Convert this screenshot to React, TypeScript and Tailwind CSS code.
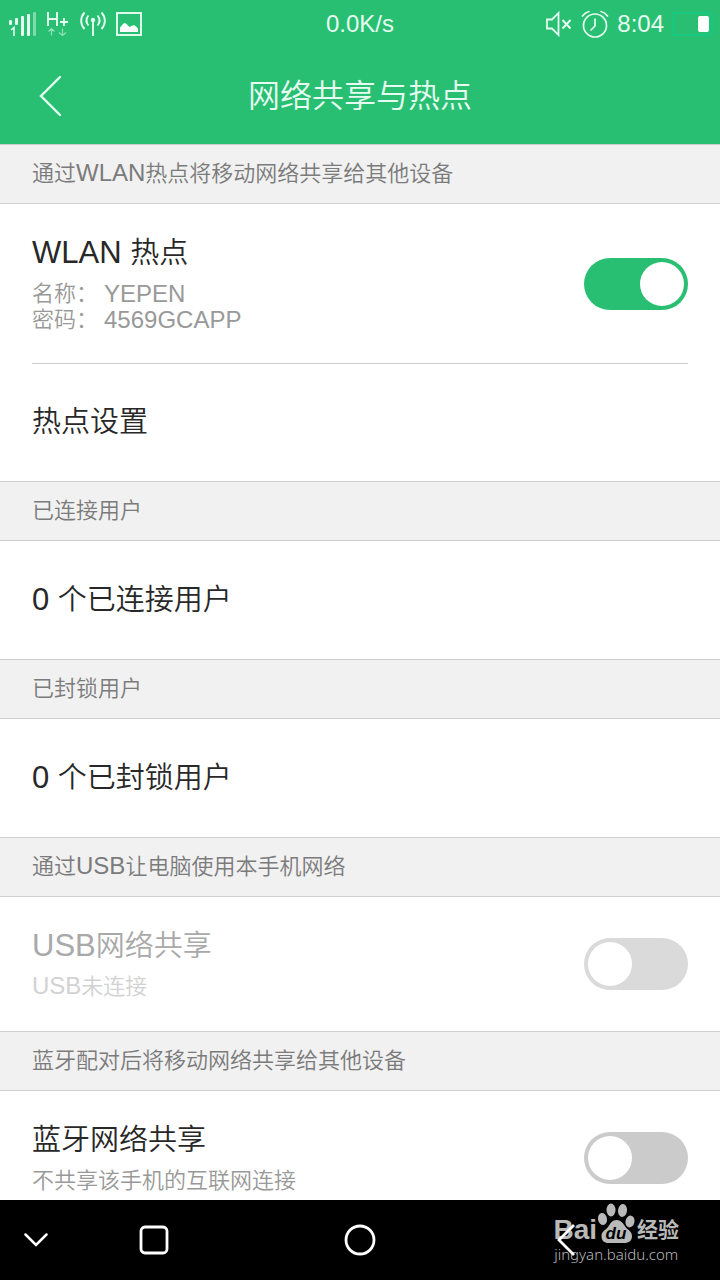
import type { ReactNode } from "react";

// Latin runs are set slightly larger than the Chinese text around them
const MixedText = ({ text, latin }: { text: string; latin: string }) => (
    <>
        {text.split(/([A-Za-z0-9]+ ?)/).map((part, i) =>
            i % 2 === 1 ? (
                <span key={i} className={latin}>
                    {part}
                </span>
            ) : (
                part
            )
        )}
    </>
);

const SectionTitle = ({ children }: { children: string }) => (
    <h2 className="flex h-[60px] items-center border-y border-[#cfcfcf] bg-[#f1f1f1] px-8 text-[22px] leading-7 text-[#7b7b7b]">
        <span>
            <MixedText text={children} latin="text-[24px] leading-none" />
        </span>
    </h2>
);

const LinkRow = ({ children }: { children: string }) => (
    <button className="flex h-[118px] w-full items-center px-8 text-left text-[29px] leading-[48px] text-[#282828]">
        <span>
            <MixedText text={children} latin="text-[31px] leading-none" />
        </span>
    </button>
);

type SwitchRowProps = {
    id: string;
    title: string;
    checked?: boolean;
    disabled?: boolean;
    children: ReactNode;
};

const SwitchRow = ({ id, title, checked, disabled, children }: SwitchRowProps) => (
    <div className="flex items-center justify-between px-8 py-[25px]">
        <div className="pb-[6px]">
            <label
                htmlFor={id}
                className={`block text-[29px] leading-[48px] ${disabled ? "text-[#a9a9a9]" : "text-[#282828]"}`}
            >
                <MixedText text={title} latin="text-[31px] leading-none" />
            </label>
            <div
                className={`mt-1 text-[22px] leading-[26px] ${disabled ? "text-[#d2d2d2]" : "text-[#999999]"}`}
            >
                {children}
            </div>
        </div>
        <input
            id={id}
            type="checkbox"
            role="switch"
            defaultChecked={checked}
            disabled={disabled}
            className="h-[52px] w-[104px] shrink-0 appearance-none rounded-full bg-[#cbcbcb] p-1 before:block before:size-11 before:rounded-full before:bg-white checked:bg-[#28bf73] checked:before:ml-auto disabled:bg-[#dadada]"
        />
    </div>
);

const SignalIcon = () => (
    <svg width="28" height="26" viewBox="0 0 28 26" fill="currentColor">
        <rect x="1" y="9" width="3" height="5" rx="1" />
        <rect x="7" y="7" width="3" height="7" rx="1" />
        <rect x="13" y="5" width="3" height="20" rx="1" />
        <rect x="19" y="3" width="3" height="22" rx="1" />
        <rect x="25" y="1" width="3" height="24" rx="1" opacity="0.45" />
        <path d="M3 19l3-2.500V25" fill="none" stroke="currentColor" strokeWidth="1.600" />
    </svg>
);

const DataIcon = () => (
    <svg width="24" height="26" viewBox="0 0 24 26" fill="none" stroke="currentColor">
        <path d="M2 1v14M11 1v14M2 8h9M14 11h8M18 7v8" strokeWidth="1.900" />
        <path d="M5.500 24.500v-7M2.500 20.500l3-3 3 3M16.500 17.500v7M13 21.500l3.500 3 3.500-3" strokeWidth="1.200" opacity="0.55" />
    </svg>
);

const AntennaIcon = () => (
    <svg width="26" height="26" viewBox="0 0 26 26" fill="none" stroke="currentColor" strokeWidth="1.900">
        <circle cx="13" cy="9" r="2.200" fill="currentColor" stroke="none" />
        <path d="M13 9v16" />
        <path d="M8.500 4.500c-2.500 3-2.500 7 0 10M17.500 4.500c2.500 3 2.500 7 0 10" />
        <path d="M4.500 1.500c-4.500 5-4.500 11.500 0 16.500M21.500 1.500c4.500 5 4.500 11.500 0 16.500" />
    </svg>
);

const PictureIcon = () => (
    <svg width="26" height="26" viewBox="0 0 26 26">
        <rect x="1" y="2" width="24" height="22" fill="none" stroke="currentColor" strokeWidth="1.900" />
        <path
            d="M4 21v-4.500l3.500-4q1.500-1 3 .5l3 3 3-1.500q1.500-.8 3 .5l2.500 2.500V21z"
            fill="white"
        />
    </svg>
);

const MuteIcon = () => (
    <svg width="28" height="26" viewBox="0 0 28 26" fill="none" stroke="currentColor" strokeWidth="1.800">
        <path d="M2 8.500h5l6.500-6.500v22L7 17.500H2z" />
        <path d="M17.500 9l8 8.500M25.500 9l-8 8.500" strokeWidth="2" />
    </svg>
);

const AlarmIcon = () => (
    <svg width="28" height="28" viewBox="0 0 28 28" fill="none" stroke="currentColor" strokeWidth="1.700" strokeLinecap="round">
        <circle cx="14" cy="15.500" r="11.500" />
        <path d="M14 9v7l-4 4M1.500 6Q4 2.500 8 1.500M20 1.500q4 1 6.500 4.500" />
    </svg>
);

const BatteryIcon = () => (
    <svg width="42" height="26" viewBox="0 0 42 26">
        <path d="M1 2h37v6h2v10h-2v6H1z" fill="none" stroke="#12cb88" strokeWidth="1.500" />
        <rect x="26" y="5" width="11" height="16" rx="2" fill="white" />
    </svg>
);

const StatusBar = () => (
    <div className="grid h-12 grid-cols-[1fr_auto_1fr] items-center text-[24px] leading-7">
        <div className="flex items-center pl-2">
            <SignalIcon />
            <span className="ml-[10px]">
                <DataIcon />
            </span>
            <span className="ml-[10px]">
                <AntennaIcon />
            </span>
            <span className="ml-[10px]">
                <PictureIcon />
            </span>
        </div>
        <span>0.0K/s</span>
        <div className="flex items-center justify-end pr-[6px]">
            <MuteIcon />
            <span className="ml-2">
                <AlarmIcon />
            </span>
            <span className="ml-2">8:04</span>
            <span className="ml-2">
                <BatteryIcon />
            </span>
        </div>
    </div>
);

const Watermark = () => (
    <div className="pointer-events-none absolute right-[41px] bottom-4 text-[#b9b9b9]">
        <div className="flex items-end">
            <span className="text-[28px] leading-7 font-bold">Bai</span>
            <svg width="40" height="42" viewBox="0 0 40 42" fill="currentColor">
                <ellipse cx="14" cy="8" rx="4.500" ry="6.500" />
                <ellipse cx="25.500" cy="8.500" rx="4.500" ry="6.500" transform="rotate(8 25.500 8.500)" />
                <ellipse cx="5.500" cy="17" rx="4.500" ry="6" transform="rotate(-10 5.500 17)" />
                <ellipse cx="33" cy="19.500" rx="4.500" ry="6" transform="rotate(12 33 19.500)" />
                <path d="M19.500 18c5 0 7 4 9 7s6.500 4 6.500 9c0 5-3.500 7-7.500 7h-16c-4 0-7-2-7-7 0-5 4.500-6 6.500-9s3.500-7 8.500-7z" />
                <text x="19" y="37" textAnchor="middle" fill="black" className="text-[17px] font-bold italic">
                    du
                </text>
            </svg>
            <span className="text-[21px] leading-7 font-bold">经验</span>
        </div>
        <div className="text-center font-['Noto_Sans',sans-serif] text-[15px] leading-5 font-light">
            jingyan.baidu.com
        </div>
    </div>
);

const NavBar = () => (
    <nav className="relative flex h-20 shrink-0 items-center bg-black pr-[51px] text-white">
        <button aria-label="Hide" className="w-[51px] shrink-0 pl-6">
            <svg width="24" height="24" viewBox="0 0 24 24" fill="none" stroke="currentColor" strokeWidth="2.500" strokeLinecap="round">
                <path d="M1.500 6.500L12 17 22.500 6.500" />
            </svg>
        </button>
        <button aria-label="Recent" className="flex flex-1 justify-center">
            <svg width="30" height="30" viewBox="0 0 30 30" fill="none" stroke="currentColor" strokeWidth="2.800">
                <rect x="2" y="2" width="26" height="26" rx="4" />
            </svg>
        </button>
        <button aria-label="Home" className="flex flex-1 justify-center">
            <svg width="32" height="32" viewBox="0 0 32 32" fill="none" stroke="currentColor" strokeWidth="2.800">
                <circle cx="16" cy="16" r="14" />
            </svg>
        </button>
        <button aria-label="Back" className="relative z-10 flex flex-1 justify-center">
            <svg width="18" height="32" viewBox="0 0 18 32" fill="none" stroke="currentColor" strokeWidth="2.800">
                <path d="M17 1L2 16l15 15" />
            </svg>
        </button>
        <Watermark />
    </nav>
);

export default function App() {
    return (
        <div className="flex h-screen flex-col bg-white font-['Liberation_Sans','Noto_Sans_CJK_SC',sans-serif] font-[350]">
            <header className="shrink-0 bg-[#28bf73] text-[#e6fcf0]">
                <StatusBar />
                <div className="grid h-24 grid-cols-[1fr_auto_1fr] items-center">
                    <button aria-label="返回" className="justify-self-start pl-[38px]">
                        <svg width="24" height="42" viewBox="0 0 24 42" fill="none" stroke="currentColor" strokeWidth="2.400" strokeLinecap="round">
                            <path d="M22 2L3 21l19 19" />
                        </svg>
                    </button>
                    <h1 className="text-[32px] leading-[48px] font-[350]">网络共享与热点</h1>
                </div>
            </header>

            <main className="min-h-0 flex-1 overflow-y-auto [scrollbar-width:none]">
                <SectionTitle>通过WLAN热点将移动网络共享给其他设备</SectionTitle>
                <SwitchRow id="wlan" title="WLAN 热点" checked>
                    <dl className="grid grid-cols-[72px_1fr]">
                        <dt>名称：</dt>
                        <dd className="text-[24px]">YEPEN</dd>
                        <dt>密码：</dt>
                        <dd className="text-[24px]">4569GCAPP</dd>
                    </dl>
                </SwitchRow>
                <hr className="mx-8 -my-px border-[#cfcfcf]" />
                <LinkRow>热点设置</LinkRow>

                <SectionTitle>已连接用户</SectionTitle>
                <LinkRow>0 个已连接用户</LinkRow>

                <SectionTitle>已封锁用户</SectionTitle>
                <LinkRow>0 个已封锁用户</LinkRow>

                <SectionTitle>通过USB让电脑使用本手机网络</SectionTitle>
                <SwitchRow id="usb" title="USB网络共享" disabled>
                    <MixedText text="USB未连接" latin="text-[24px] leading-none" />
                </SwitchRow>

                <SectionTitle>蓝牙配对后将移动网络共享给其他设备</SectionTitle>
                <SwitchRow id="bluetooth" title="蓝牙网络共享">
                    不共享该手机的互联网连接
                </SwitchRow>
            </main>

            <NavBar />
        </div>
    );
}
